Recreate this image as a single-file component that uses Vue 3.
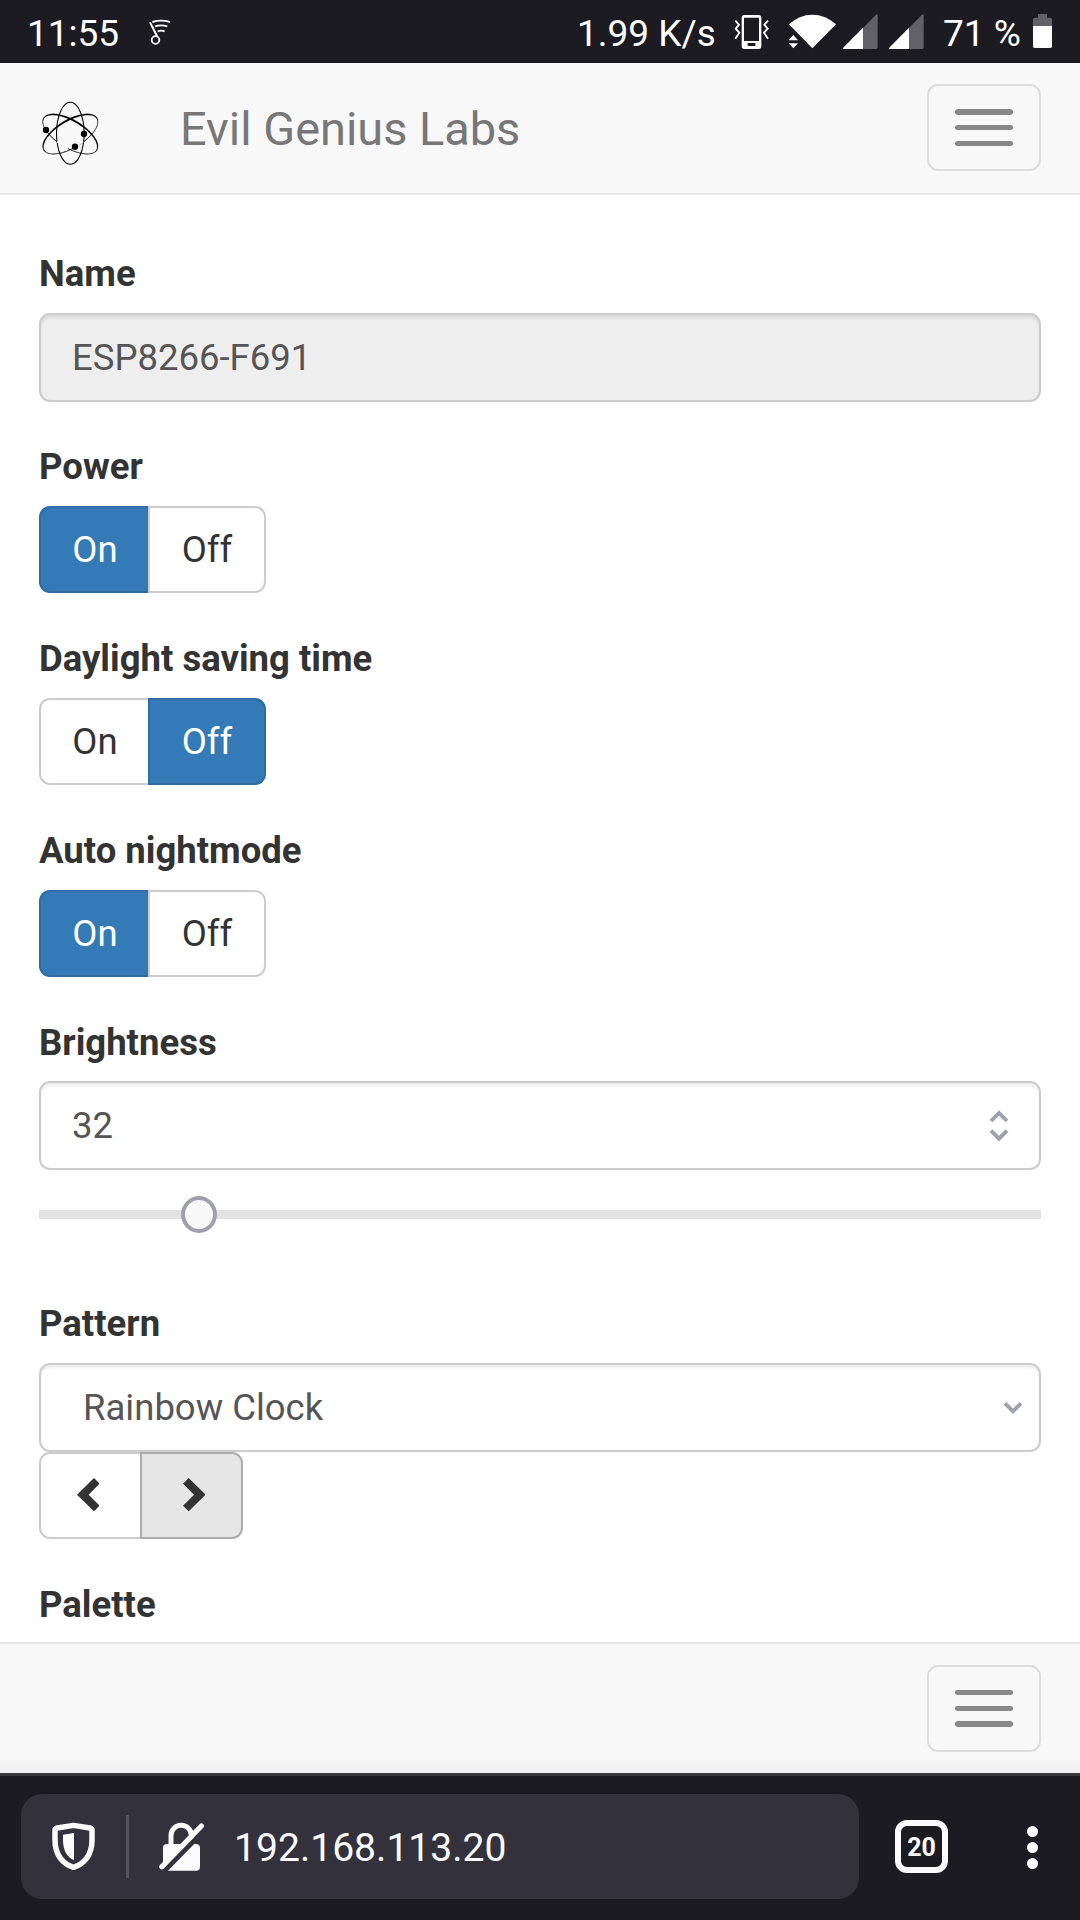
<script setup>
import { ref } from 'vue'

const deviceName = ref('ESP8266-F691')
const brightness = ref(32)
const toggles = ref([
  { label: 'Power', on: true },
  { label: 'Daylight saving time', on: false },
  { label: 'Auto nightmode', on: true }
])
</script>

<template>
  <div class="screen">
    <header class="status">
      <span class="clock">11:55</span>
      <svg class="note" viewBox="447 57 66 78" width="22" height="26" fill="none" stroke="#fff">
        <circle cx="466.500" cy="120" r="11.500" stroke-width="5.500" />
        <path d="M471 108L450 67" stroke-width="6" />
        <path d="M457 66Q484 58 510 66M465 79Q484 73 502 79M473 94Q484 90 494 94" stroke-width="5.500" />
      </svg>
      <span class="speed">1.99 K/s</span>
      <svg class="vibrate" viewBox="522 42 108 108" width="36" height="36">
        <path fill="#fff" fill-rule="evenodd" d="M553 45H596Q604 45 604 53V139Q604 147 596 147H553Q545 147 545 139V53Q545 45 553 45ZM552 55V123H597V55Q597 53 595 53H554Q552 53 552 55ZM563 129V138H586V129Z" />
        <path fill="none" stroke="#fff" stroke-width="5.500" d="M526 62L537 74L527 86L538 98L526 116M624 62L613 74L623 86L612 98L624 116" />
      </svg>
      <svg class="wifi" viewBox="684 42 147 105" width="49" height="35" fill="#fff">
        <path d="M757 145L687 73Q718 44 757 44Q797 44 828 73Z" />
        <path stroke="#1c1b22" stroke-width="12" d="M700 104L714 121V130L700 145L686 130V121Z" fill="#1c1b22" />
        <path d="M700 105L714 121H686ZM700 145L714 130H686Z" />
      </svg>
      <svg v-for="n in 2" :key="n" class="signal" viewBox="0 0 105 105" width="35" height="35">
        <path fill="#626166" d="M60 42L99 2Q104-2 104 4V100Q104 105 99 105H60Z" />
        <path fill="#fff" d="M60 41V105H3Q-2 105 2 100Z" />
      </svg>
      <span class="percent">71 %</span>
      <svg class="battery" viewBox="0 0 57 102" width="19" height="34">
        <path fill="#626166" d="M15 0H42V11H52Q57 11 57 16V36H0V16Q0 11 5 11H15Z" />
        <path fill="#fff" d="M0 36H57V97Q57 102 52 102H5Q0 102 0 97Z" />
      </svg>
    </header>

    <nav class="navbar top">
      <svg class="logo" viewBox="108 288 216 216" width="72" height="72">
        <ellipse cx="211" cy="400" rx="41.500" ry="93" fill="none" stroke="#000" stroke-width="3.200" />
        <g fill-rule="evenodd" stroke="#000" stroke-width=".7">
          <path transform="translate(211 402) rotate(31)" d="M-94 0A94 42.500 0 0 1 94 0A94 42.500 0 0 1-94 0ZM-92 1.500A92 39.500 0 0 0 92 1.500A92 39.500 0 0 0-92 1.500Z" />
          <path transform="translate(211 402) rotate(-31)" d="M-94 0A94 42.500 0 0 1 94 0A94 42.500 0 0 1-94 0ZM-92 1.500A92 39.500 0 0 0 92 1.500A92 39.500 0 0 0-92 1.500Z" />
        </g>
        <path d="M172 424L203 446M218 446L249 424" stroke="#f8f8f8" stroke-width="6" />
        <circle cx="138" cy="390" r="9.500" /><circle cx="252" cy="402" r="9.500" /><circle cx="225" cy="440" r="9.500" />
      </svg>
      <span class="brand">Evil Genius Labs</span>
      <button class="burger" aria-label="Menu"><i class="thick"></i><i></i><i></i></button>
    </nav>

    <main class="form">
      <section class="group name">
        <label>Name</label>
        <div class="control disabled">{{ deviceName }}</div>
      </section>
      <section v-for="t in toggles" :key="t.label" class="group toggle">
        <label>{{ t.label }}</label>
        <div class="buttons">
          <button class="btn first" :class="{ primary: t.on }" @click="t.on = true">On</button>
          <button class="btn last" :class="{ primary: !t.on }" @click="t.on = false">Off</button>
        </div>
      </section>
      <section class="group bright">
        <label>Brightness</label>
        <div class="control">
          {{ brightness }}
          <svg class="spin" viewBox="327 147 60 102" width="20" height="34" fill="none" stroke="#9f9fad" stroke-width="11.500">
            <path d="M333 183L357 159L381 183M333 212L357 236L381 212" />
          </svg>
        </div>
        <div class="slider"><div class="thumb" :style="{ left: brightness / 255 * 966 + 21 + 'px' }"></div></div>
      </section>
      <section class="group">
        <label>Pattern</label>
        <div class="control select">
          Rainbow Clock
          <svg class="caret" viewBox="372 183 57 42" width="19" height="14" fill="none" stroke="#9f9fad" stroke-width="11.500">
            <path d="M375 190L399 214L423 190" />
          </svg>
        </div>
        <div class="buttons">
          <button class="btn first arrow" aria-label="Previous">
            <svg viewBox="0 0 68 100" width="22.700" height="33.300" fill="#333"><path d="M0 50L51 0L68 17L35 50L68 83L51 100Z" /></svg>
          </button>
          <button class="btn last arrow pressed" aria-label="Next">
            <svg viewBox="0 0 68 100" width="22.700" height="33.300" fill="#333"><path d="M68 50L17 0L0 17L33 50L0 83L17 100Z" /></svg>
          </button>
        </div>
      </section>
      <section class="group palette"><label>Palette</label></section>
    </main>

    <nav class="navbar bottom">
      <button class="burger" aria-label="Menu"><i></i><i></i><i class="thick"></i></button>
    </nav>

    <footer class="browser">
      <div class="address">
        <svg class="shield" viewBox="0 0 43 48" width="43" height="48">
          <path fill="none" stroke="#fbfbfe" stroke-width="5.500" stroke-linejoin="round" d="M21.500 3.400L38 6Q40 6.400 40 8.500V18C40 33 32 42.500 21.500 45.300C11 42.500 3 33 3 18V8.500Q3 6.400 5 6Z" />
          <path fill="#fbfbfe" d="M22 11L11 12.800V18C11 28.500 15.500 36 22 38Z" />
        </svg>
        <span class="divider"></span>
        <svg class="lock" viewBox="0 0 46 50" width="46" height="50">
          <path fill="none" stroke="#fbfbfe" stroke-width="5" d="M13 24V13.500A10.200 10.200 0 0 1 33.400 13.500V24" />
          <rect x="5" y="22" width="37" height="26.700" rx="4" fill="#fbfbfe" />
          <path stroke="#33313c" stroke-width="4.800" d="M3.400 52L47.400 7.200" />
          <path stroke="#fbfbfe" stroke-width="5.200" stroke-linecap="round" d="M3.800 44.700L43.400 4" />
        </svg>
        <span class="url">192.168.113.20</span>
      </div>
      <div class="tabs">20</div>
      <div class="menu"><i></i><i></i><i></i></div>
    </footer>
  </div>
</template>

<style>
body { margin: 0; }
</style>

<style scoped>
* { box-sizing: border-box; }
.screen {
  width: 1080px; height: 1920px; overflow: hidden;
  display: flex; flex-direction: column;
  background: #fff; color: #333;
  font-family: Roboto, "Liberation Sans", sans-serif;
  font-size: 36.5px; line-height: 52px;
}
svg { display: block; flex: none; }
button { font: inherit; color: inherit; padding: 0; margin: 0; }

.status {
  height: 63px; flex: none; display: flex; align-items: flex-start;
  background: #1c1b22; color: #fff; padding: 14px 0 0 27px; font-size: 37px; line-height: 39px;
  white-space: nowrap;
}
.clock { width: 122px; }
.note { margin-top: 5px; }
.speed { margin-left: 406px; width: 157px; }
.wifi { margin-left: 18px; }
.signal { margin-left: 6px; }
.signal + .signal { margin-left: 11px; }
.percent { margin-left: 19px; width: 90px; }

.navbar { flex: none; display: flex; background: #f8f8f8; }
.top { height: 132px; border-bottom: 2px solid #e7e7e7; padding: 21px 39px 0 36px; }
.logo { margin-top: 12px; }
.brand { margin-left: 72px; font-size: 46.9px; line-height: 89px; color: #777; }
.burger {
  margin-left: auto; width: 114px; height: 87px; flex: none;
  border: 2px solid #ddd; border-radius: 11px; background: transparent;
  display: flex; flex-direction: column; align-items: center; padding-top: 23px; gap: 10px;
}
.burger i { width: 58px; height: 5px; border-radius: 3px; background: #888; }
.burger i:nth-child(2) { margin-bottom: 1px; }
.burger i.thick { height: 6px; }
.bottom .burger i:first-child { margin-bottom: 1px; }
.bottom .burger i:nth-child(2) { margin-bottom: 0; }
.bottom {
  height: 131px; border-top: 2px solid #e7e7e7; padding: 21px 39px 0;
  background: linear-gradient(#f8f8f8 0 111px, #f0f0f0 129px);
}

.form { height: 1447px; flex: none; overflow: hidden; padding: 52px 39px 0; }
.group { margin-bottom: 39px; }
.name { margin-bottom: 38px; }
.toggle:nth-child(4) { margin-bottom: 38px; }
label { display: block; height: 66px; line-height: 53px; font-weight: 700; }
.bright label { line-height: 55px; }
.control {
  height: 89px; border: 2px solid #ccc; border-radius: 11px;
  box-shadow: inset 0 3px 3px rgba(0, 0, 0, .075);
  display: flex; align-items: center; justify-content: space-between;
  padding: 1px 30px 0 31px; color: #555;
}
.disabled { background: #eee; }
.select { padding: 1px 16px 0 42px; }
.buttons { display: flex; }
.btn {
  height: 87px; border: 2px solid #ccc; background: #fff; line-height: 52px;
  display: flex; align-items: center; justify-content: center;
}
.first { width: 111px; padding-left: 1px; border-radius: 11px 0 0 11px; }
.last { width: 118px; margin-left: -2px; border-radius: 0 11px 11px 0; }
.btn.primary { background: #337ab7; border-color: #2e6da4; color: #fff; }
.first.primary { border-right-color: #ccc; }
.arrow.first { width: 103px; padding: 0 5px 2px 0; }
.arrow.last { width: 103px; padding: 0 0 2px 5px; }
.pressed { background: #e6e6e6; border-color: #adadad; }
.bright { margin-bottom: 78px; }
.slider { position: relative; height: 9px; margin-top: 40px; background: #e2e2e2; }
.thumb {
  position: absolute; top: -14px; width: 36px; height: 37px;
  border: 4px solid #9f9fad; border-radius: 50%; background: #f9f9fa;
}

.browser {
  flex: 1; display: flex; align-items: flex-start; background: #1c1b22; color: #fbfbfe;
  border-top: 3px solid #38373d; padding: 18px 0 0 21px;
}
.address {
  width: 838px; height: 105px; border-radius: 21px; background: #33313c;
  display: flex; align-items: flex-start; padding: 21px 0 0 31px;
}
.shield { margin-top: 7px; }
.divider { margin-left: 31px; width: 3px; height: 63px; background: #55535f; }
.lock { margin: 7px 0 0 29px; }
.url { margin-left: 30px; font-size: 39.1px; line-height: 66px; }
.tabs {
  margin: 26px 0 0 36px; width: 53px; height: 53px; border: 6px solid #fbfbfe; border-radius: 12px;
  font-size: 25px; font-weight: 700; line-height: 43px; text-align: center;
}
.menu { margin: 32px 0 0 79px; display: flex; flex-direction: column; gap: 5px; }
.menu i { width: 11px; height: 11px; border-radius: 50%; background: #fbfbfe; }
</style>
